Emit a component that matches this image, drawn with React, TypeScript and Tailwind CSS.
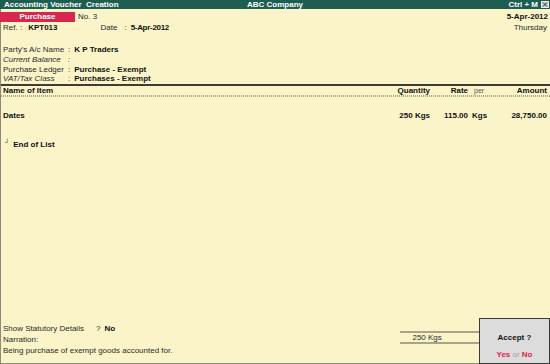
import React from "react";

export default function App() {
  const font = { fontFamily: '"Liberation Sans", Arial, sans-serif' };
  return (
    <div
      className="w-[550px] h-[364px] bg-[#fbf4c8] text-[8px] text-[#2a2a2a] flex flex-col relative overflow-hidden"
      style={font}
    >
      {/* Title bar */}
      <div className="h-[9px] bg-[#1e5d51] text-white font-bold leading-[9px] grid grid-cols-[1fr_auto_1fr] items-center">
        <div className="pl-[4px]">Accounting Voucher&nbsp; Creation</div>
        <div>ABC Company</div>
        <div className="flex justify-end items-center gap-[3px] pr-[1px]">
          <span>Ctrl + M</span>
          <span className="w-[8px] h-[7px] bg-[#c8d0c8] border border-[#e8ece8] flex items-center justify-center">
            <svg width="6" height="5" viewBox="0 0 6 5">
              <path d="M1 0.5 L5 4.5 M5 0.5 L1 4.5" stroke="#333" strokeWidth="1" />
            </svg>
          </span>
        </div>
      </div>

      <div className="flex-1 flex flex-col border-l border-b border-[#8c8a7c]">
        {/* Voucher type row */}
        <div className="mt-[3px] h-[10px] flex items-center leading-[10px]">
          <div className="w-[75px] h-[10px] bg-[#d9264f] text-white font-bold text-center -ml-[1px]">
            Purchase
          </div>
          <div className="ml-[3px]">No. 3</div>
          <div className="ml-auto pr-[2px] font-bold text-[#111]">5-Apr-2012</div>
        </div>
        {/* Ref row */}
        <div className="mt-[1px] h-[10px] flex items-center leading-[10px] pl-[2px]">
          <span>Ref. :</span>
          <span className="ml-[6px] font-bold text-[#111]">KPT013</span>
          <span className="ml-[43px]">Date</span>
          <span className="ml-[7px]">:</span>
          <span className="ml-[4px] font-bold text-[#111] tracking-[-0.3px]">5-Apr-2012</span>
          <span className="ml-auto pr-[3px]">Thursday</span>
        </div>

        {/* Party details */}
        <div className="mt-[12px] flex flex-col pl-[2px] leading-[10px]">
          <div className="h-[10px] flex">
            <span className="w-[65px]">Party's A/c Name</span>
            <span>:</span>
            <span className="ml-[4px] font-bold text-[#111]">K P Traders</span>
          </div>
          <div className="h-[10px] flex italic">
            <span className="w-[65px]">Current Balance</span>
            <span>:</span>
          </div>
          <div className="h-[9px] flex">
            <span className="w-[65px]">Purchase Ledger</span>
            <span>:</span>
            <span className="ml-[4px] font-bold text-[#111]">Purchase - Exempt</span>
          </div>
          <div className="h-[9px] flex">
            <span className="w-[65px] italic">VAT/Tax Class</span>
            <span>:</span>
            <span className="ml-[4px] font-bold text-[#111]">Purchases - Exempt</span>
          </div>
        </div>

        {/* Table header */}
        <div className="mt-[1px] h-[2px] bg-[#3f3d33]" />
        <div className="h-[9px] leading-[10px] flex font-bold text-[#111] pl-[2px] pr-[3px]">
          <div className="flex-1">Name of Item</div>
          <div className="w-[60px] text-right">Quantity</div>
          <div className="w-[38px] text-right">Rate</div>
          <div className="w-[32px] pl-[6px] font-normal text-[#555] text-[7px]">per</div>
          <div className="w-[47px] text-right">Amount</div>
        </div>
        <div className="h-[2px] border-t border-b border-[#a9a48a] border-dotted" />

        {/* Item row */}
        <div className="mt-[14px] h-[10px] leading-[10px] flex font-bold text-[#111] pl-[2px] pr-[3px]">
          <div className="flex-1">Dates</div>
          <div className="w-[60px] text-right">250 Kgs</div>
          <div className="w-[38px] text-right">115.00</div>
          <div className="w-[32px] pl-[4px]">Kgs</div>
          <div className="w-[47px] text-right">28,750.00</div>
        </div>

        {/* End of list */}
        <div className="mt-[19px] h-[10px] leading-[10px] flex font-bold text-[#111] pl-[4px]">
          <span className="text-[6px] leading-[6px] mt-[-1px]">┘</span>
          <span className="ml-[4px]">End of List</span>
        </div>

        {/* Bottom */}
        <div className="mt-auto mb-[6px] flex items-end">
          <div className="flex flex-col pl-[2px] leading-[11px]">
            <div className="h-[11px] flex">
              <span>Show Statutory Details</span>
              <span className="ml-[12px]">?</span>
              <span className="ml-[4px] font-bold text-[#111]">No</span>
            </div>
            <div className="h-[11px]">Narration:</div>
            <div className="h-[12px] leading-[12px]">Being purchase of exempt goods accounted for.</div>
          </div>
          <div className="ml-[228px] mb-[13px] w-[89px] h-[13px] border-y-2 border-[#a8a38c] leading-[9px] pl-[12px]">
            250 Kgs
          </div>
        </div>
      </div>

      {/* Accept dialog */}
      <div className="absolute left-[479px] top-[318px] w-[71px] h-[46px] bg-[#dcdcdc] border border-[#3a3a3a] flex flex-col items-center">
        <div className="mt-[13px] font-bold text-[#111] text-[8px]">Accept ?</div>
        <div className="mt-auto mb-[2px] font-bold text-[8px]">
          <span className="text-[#e0234a]">Yes</span>
          <span className="font-normal text-[#a0a0a0]"> or </span>
          <span className="text-[#e0234a]">No</span>
        </div>
      </div>
    </div>
  );
}
